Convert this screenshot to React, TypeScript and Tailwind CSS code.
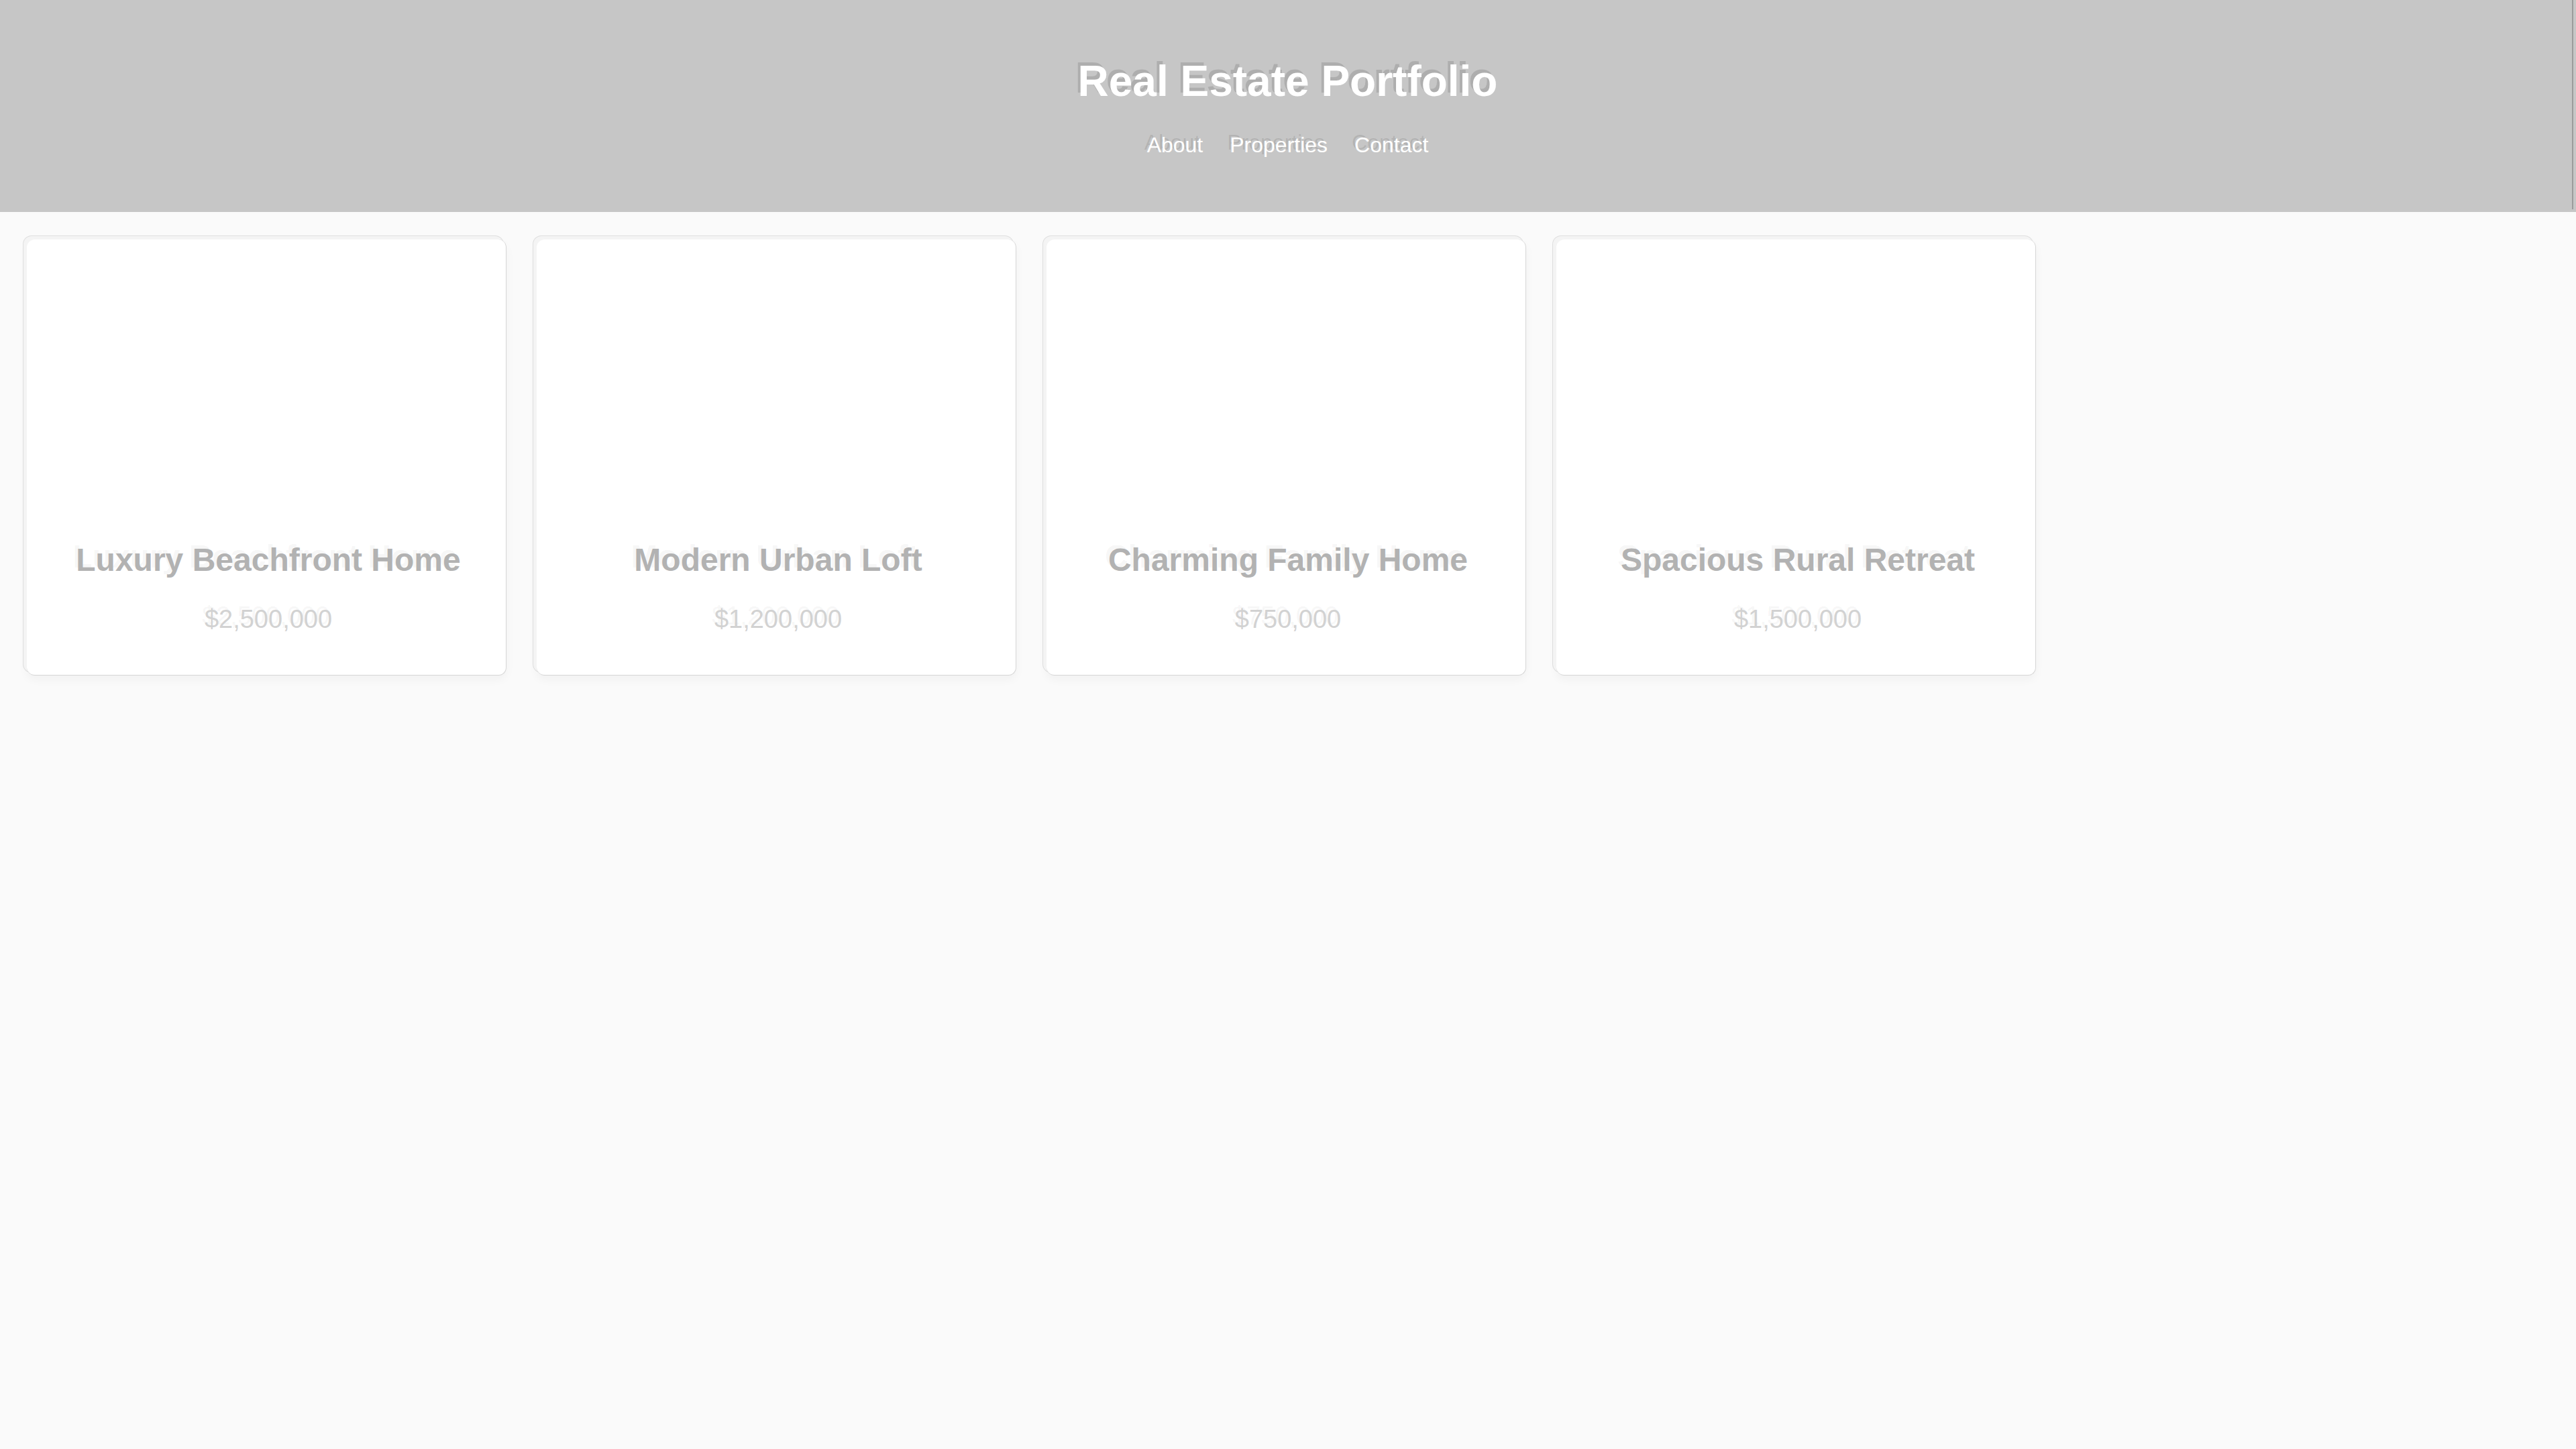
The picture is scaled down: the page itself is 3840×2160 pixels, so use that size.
import React from "react";

const properties = [
  { title: "Luxury Beachfront Home", price: "$2,500,000" },
  { title: "Modern Urban Loft", price: "$1,200,000" },
  { title: "Charming Family Home", price: "$750,000" },
  { title: "Spacious Rural Retreat", price: "$1,500,000" },
];

export default function App() {
  return (
    <div
      className="min-h-screen w-full bg-[#fafafa]"
      style={{ fontFamily: '"Liberation Sans", Arial, sans-serif' }}
    >
      <header className="bg-[#c6c6c6] pl-[5px] pr-[4px] pb-[4px]">
        <div className="flex h-[312px] flex-col items-center border-r-2 border-[#9c9c9c] pt-[84px]">
          <h1 className="text-[64px] font-bold leading-[74px] text-white [text-shadow:-4px_-5px_0_rgba(0,0,0,0.12)]">
            Real Estate Portfolio
          </h1>
          <nav className="mt-[40px] flex gap-[40px] text-[32px] leading-[37px] text-white [text-shadow:-4px_-4px_0_rgba(0,0,0,0.1)]">
            <a href="#about">About</a>
            <a href="#properties">Properties</a>
            <a href="#contact">Contact</a>
          </nav>
        </div>
      </header>

      <main className="flex gap-[45px] pl-[40px] pt-[41px]">
        {properties.map((p) => (
          <div
            key={p.title}
            className="flex w-[715px] flex-col items-center rounded-[12px] border-r border-b border-[#d6d6d6] bg-white pl-[6px] shadow-[-5px_-5px_0_0_#f4f4f4,-5px_-5px_0_1px_#dedede,0_6px_14px_rgba(0,0,0,0.04)]"
          >
            <div className="h-[450px] w-full" />
            <h2 className="text-[48px] font-bold leading-[56px] text-[#b2b2b2] [text-shadow:-5px_-5px_0_rgba(0,0,0,0.05)]">
              {p.title}
            </h2>
            <p className="mt-[38px] pb-[61px] text-[38px] leading-[44px] text-[#d2d2d2] [text-shadow:-4px_-5px_0_rgba(0,0,0,0.05)]">
              {p.price}
            </p>
          </div>
        ))}
      </main>
    </div>
  );
}
